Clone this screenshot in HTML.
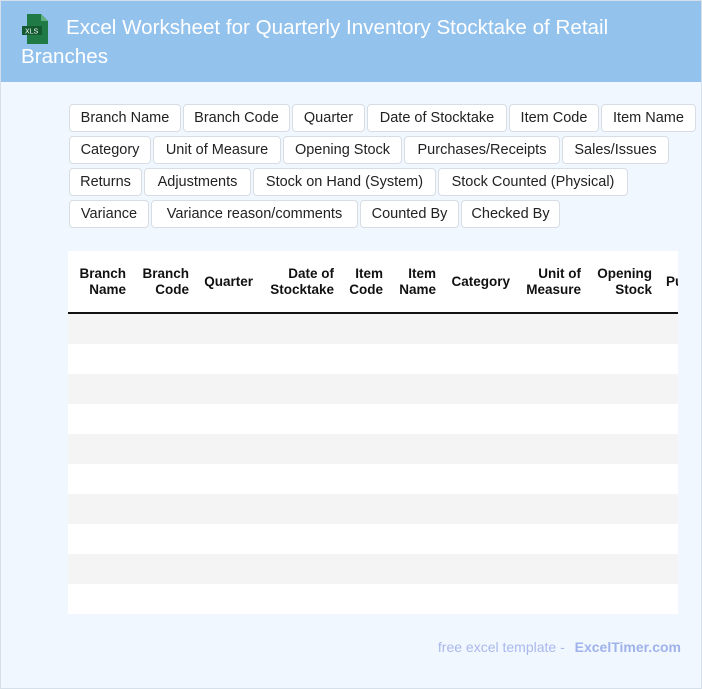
<!DOCTYPE html>
<html><head><meta charset="utf-8"><style>
*{box-sizing:border-box;margin:0;padding:0}
body{width:702px;height:689px;background:#f0f7ff;font-family:"Liberation Sans",Arial,sans-serif;position:relative;overflow:hidden}
.frame{position:absolute;left:0;top:0;width:702px;height:689px;border:1px solid #d6e0ea;pointer-events:none}
.hdr{position:absolute;left:0;top:0;width:702px;height:82px;background:#93c2ec;color:#fff;font-size:20.6px;line-height:29px;padding:13px 0 0 21px}
.hdr .t{padding-left:45px}
.icon{position:absolute;left:22px;top:14px}
.row{position:absolute;left:69px;display:flex;gap:2px}
.tag{height:28px;background:#fff;border:1px solid #d8dde3;border-radius:4px;font-size:14.5px;line-height:26px;text-align:center;color:#222;white-space:nowrap}
.tbl{position:absolute;left:68px;top:251px;width:610px;height:363px;background:#fff;overflow:hidden}
.th{position:absolute;top:15px;font-weight:bold;font-size:13.5px;line-height:16px;text-align:right;color:#111;white-space:nowrap}
.line{position:absolute;left:0;top:61px;width:610px;height:2px;background:#111}
.r{position:absolute;left:0;width:610px;height:30px}
.foot{position:absolute;right:21px;top:639px;font-size:14px;color:#aab8ec}
.foot b{margin-left:6px;color:#9fb2ea}
</style></head><body>
<div class="hdr">
<svg class="icon" width="28" height="30" viewBox="0 0 28 30"><path d="M5 0h14l7 7v23H5z" fill="#1f7a45"/><path d="M19 0v7h7z" fill="#5fae7d"/><rect x="0" y="12" width="20" height="9" fill="#135a31"/><text x="3" y="19.5" font-size="7" fill="#fff" font-family="Liberation Sans">XLS</text></svg>
<div class="t">Excel Worksheet for Quarterly Inventory Stocktake of Retail</div>
<div>Branches</div>
</div>
<div class="row" style="top:104px"><div class="tag" style="width:112px">Branch Name</div><div class="tag" style="width:107px">Branch Code</div><div class="tag" style="width:73px">Quarter</div><div class="tag" style="width:140px">Date of Stocktake</div><div class="tag" style="width:90px">Item Code</div><div class="tag" style="width:95px">Item Name</div></div>
<div class="row" style="top:136px"><div class="tag" style="width:82px">Category</div><div class="tag" style="width:128px">Unit of Measure</div><div class="tag" style="width:119px">Opening Stock</div><div class="tag" style="width:156px">Purchases/Receipts</div><div class="tag" style="width:107px">Sales/Issues</div></div>
<div class="row" style="top:168px"><div class="tag" style="width:73px">Returns</div><div class="tag" style="width:107px">Adjustments</div><div class="tag" style="width:183px">Stock on Hand (System)</div><div class="tag" style="width:190px">Stock Counted (Physical)</div></div>
<div class="row" style="top:200px"><div class="tag" style="width:80px">Variance</div><div class="tag" style="width:207px">Variance reason/comments</div><div class="tag" style="width:99px">Counted By</div><div class="tag" style="width:99px">Checked By</div></div>
<div class="tbl">
<div class="th" style="right:552px">Branch<br>Name</div>
<div class="th" style="right:489px">Branch<br>Code</div>
<div class="th" style="right:425px;top:23px">Quarter</div>
<div class="th" style="right:344px">Date of<br>Stocktake</div>
<div class="th" style="right:295px">Item<br>Code</div>
<div class="th" style="right:242px">Item<br>Name</div>
<div class="th" style="right:168px;top:23px">Category</div>
<div class="th" style="right:97px">Unit of<br>Measure</div>
<div class="th" style="right:26px">Opening<br>Stock</div>
<div class="th" style="left:598px;top:23px;text-align:left">Purchases</div>
<div class="line"></div>
<div class="r" style="top:63px;background:#f4f4f4"></div>
<div class="r" style="top:123px;background:#f4f4f4"></div>
<div class="r" style="top:183px;background:#f4f4f4"></div>
<div class="r" style="top:243px;background:#f4f4f4"></div>
<div class="r" style="top:303px;background:#f4f4f4"></div>
</div>
<div class="foot">free excel template - <b>ExcelTimer.com</b></div>
<div class="frame"></div>
</body></html>
